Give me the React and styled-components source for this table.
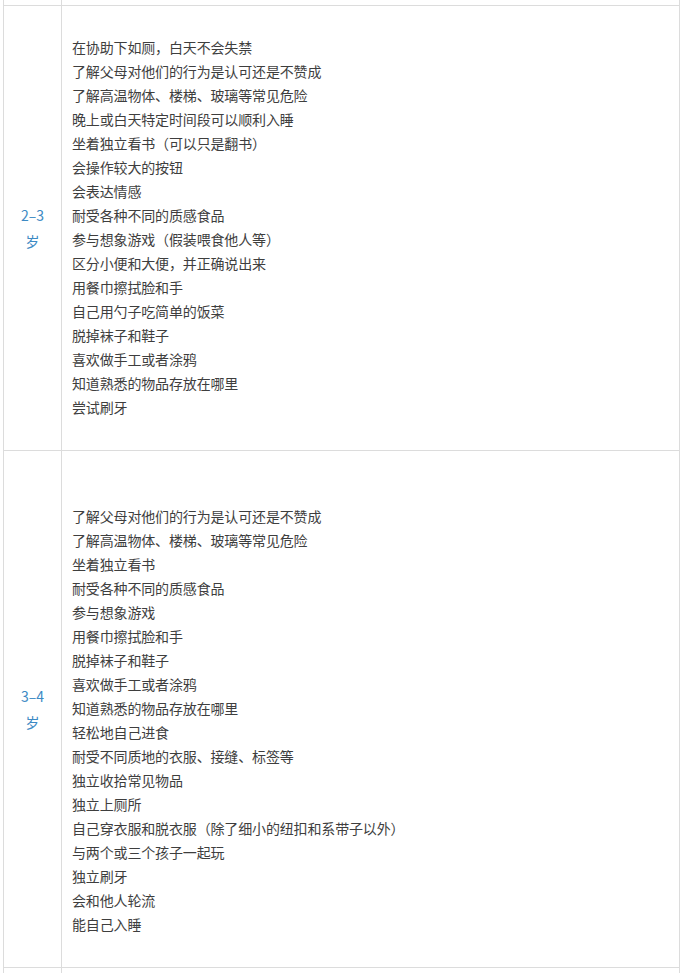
import React from 'react';
import styled, { createGlobalStyle } from 'styled-components';

const GlobalStyle = createGlobalStyle`
  html, body {
    margin: 0;
    padding: 0;
    background: #fff;
  }
  body {
    font-family: "Noto Sans CJK SC", "Noto Sans", sans-serif;
  }
`;

const Table = styled.div`
  margin-left: 3px;
  width: 677px;
  border-left: 1px solid #dcdcdc;
  border-right: 1px solid #dcdcdc;
  box-sizing: border-box;
`;

const Row = styled.div`
  display: grid;
  grid-template-columns: 58px 1fr;
  border-bottom: 1px solid #dcdcdc;
  min-height: ${props => props.$minHeight || 0}px;
`;

const AgeCell = styled.div`
  display: flex;
  flex-direction: column;
  align-items: center;
  justify-content: center;
  border-right: 1px solid #dcdcdc;
  color: #3d8ac4;
  font-size: 14px;
  line-height: 26px;
`;

const ItemCell = styled.div`
  padding: 29px 10px 31px 10px;
  color: #3e3e3e;
  font-size: 14px;
  line-height: 24px;
  letter-spacing: -0.15px;
`;

const Item = styled.div`
  height: 24px;
  white-space: nowrap;
`;

const rows = [
  {
    age: ['2–3', '岁'],
    blankTop: false,
    items: [
      '在协助下如厕，白天不会失禁',
      '了解父母对他们的行为是认可还是不赞成',
      '了解高温物体、楼梯、玻璃等常见危险',
      '晚上或白天特定时间段可以顺利入睡',
      '坐着独立看书（可以只是翻书）',
      '会操作较大的按钮',
      '会表达情感',
      '耐受各种不同的质感食品',
      '参与想象游戏（假装喂食他人等）',
      '区分小便和大便，并正确说出来',
      '用餐巾擦拭脸和手',
      '自己用勺子吃简单的饭菜',
      '脱掉袜子和鞋子',
      '喜欢做手工或者涂鸦',
      '知道熟悉的物品存放在哪里',
      '尝试刷牙',
    ],
  },
  {
    age: ['3–4', '岁'],
    blankTop: true,
    items: [
      '了解父母对他们的行为是认可还是不赞成',
      '了解高温物体、楼梯、玻璃等常见危险',
      '坐着独立看书',
      '耐受各种不同的质感食品',
      '参与想象游戏',
      '用餐巾擦拭脸和手',
      '脱掉袜子和鞋子',
      '喜欢做手工或者涂鸦',
      '知道熟悉的物品存放在哪里',
      '轻松地自己进食',
      '耐受不同质地的衣服、接缝、标签等',
      '独立收拾常见物品',
      '独立上厕所',
      '自己穿衣服和脱衣服（除了细小的纽扣和系带子以外）',
      '与两个或三个孩子一起玩',
      '独立刷牙',
      '会和他人轮流',
      '能自己入睡',
    ],
  },
];

const App = () => (
  <>
    <GlobalStyle />
    <Table>
      <Row $minHeight={5}>
        <AgeCell />
        <div />
      </Row>
      {rows.map(row => (
        <Row key={row.age[0]}>
          <AgeCell>
            {row.age.map(a => (
              <span key={a}>{a}</span>
            ))}
          </AgeCell>
          <ItemCell>
            {row.blankTop && <Item />}
            {row.items.map(item => (
              <Item key={item}>{item}</Item>
            ))}
          </ItemCell>
        </Row>
      ))}
      <Row $minHeight={40}>
        <AgeCell />
        <div />
      </Row>
    </Table>
  </>
);

export default App;
